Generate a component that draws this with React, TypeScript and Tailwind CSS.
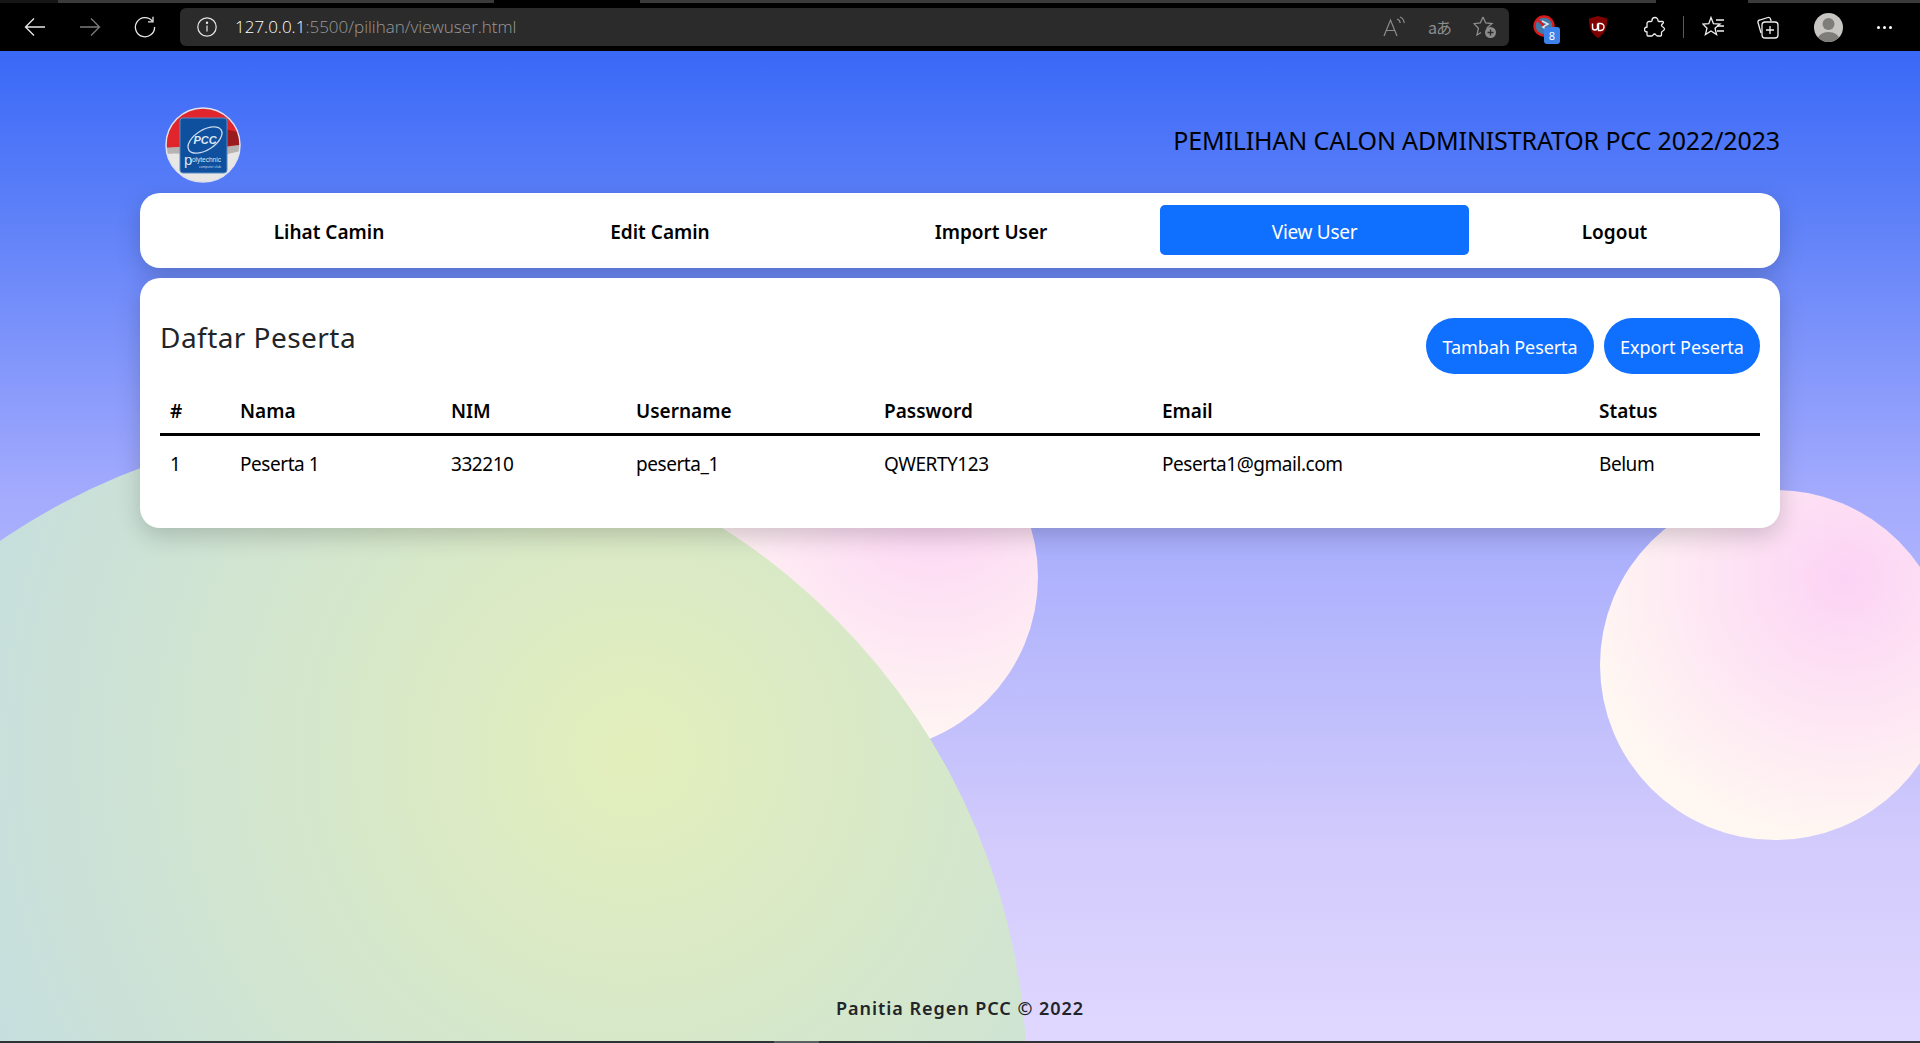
import React from "react";

const cols = ["w-[70px]", "w-[211px]", "w-[185px]", "w-[248px]", "w-[278px]", "w-[437px]", "w-[171px]"];
const heads = ["#", "Nama", "NIM", "Username", "Password", "Email", "Status"];
const cells = ["1", "Peserta 1", "332210", "peserta_1", "QWERTY123", "Peserta1@gmail.com", "Belum"];

function Logo() {
  return (
    <svg width="76" height="76" viewBox="0 0 76 76" className="block">
      <defs>
        <clipPath id="lc"><circle cx="38" cy="38" r="37" /></clipPath>
      </defs>
      <g clipPath="url(#lc)">
        <rect width="76" height="76" fill="#e9e6e6" />
        <rect width="76" height="42" fill="#e0252c" />
        <path d="M0 41 Q20 38 40 44 L76 37 L76 44 L40 52 Q20 45 0 47Z" fill="#b7b3b3" />
        <path d="M60 22 L76 26 L76 38 L62 39Z" fill="#9b1a20" />
      </g>
      <circle cx="38" cy="38" r="37" fill="none" stroke="#dfe3ee" strokeWidth="1.5" />
      <rect x="15" y="11" width="47" height="55" rx="3" fill="#0e4f9e" stroke="#5d8cc4" strokeWidth="1" />
      <ellipse cx="40" cy="33" rx="19" ry="10" fill="none" stroke="#c9d8ec" strokeWidth="1.3" transform="rotate(-32 40 33)" />
      <text x="40" y="37" textAnchor="middle" fontSize="11" fontStyle="italic" fontWeight="700" fill="#dbe6f4" fontFamily="'Liberation Sans',sans-serif">PCC</text>
      <text x="19" y="58" fontSize="15" fill="#dbe6f4" fontFamily="'Liberation Sans',sans-serif">p</text>
      <text x="27" y="55" fontSize="6.5" fill="#dbe6f4" fontFamily="'Liberation Sans',sans-serif">olytechnic</text>
      <text x="34" y="61" fontSize="3.5" fill="#c5d4e8" fontFamily="'Liberation Sans',sans-serif">computer club</text>
    </svg>
  );
}

function Chrome() {
  return (
    <div className="relative flex h-[51px] shrink-0 items-start bg-black pt-[8px] text-white">
      <div className="absolute left-0 top-0 flex h-[3px] w-full">
        <div className="w-[58px] bg-[#161616]" />
        <div className="w-[436px] bg-[#3a3a3a]" />
        <div className="w-[146px] bg-black" />
        <div className="w-[1016px] bg-[#3a3a3a]" />
        <div className="w-[92px] bg-black" />
        <div className="flex-1 bg-[#3a3a3a]" />
      </div>
      <div className="ml-[7px] flex h-[38px] items-center">
        <div className="flex w-[55px] justify-center">
          <svg width="22" height="22" viewBox="0 0 22 22" fill="none" stroke="#e8e8e8" strokeWidth="1.3"><path d="M21 11H1.5M10 2.5 1.5 11l8.5 8.5" /></svg>
        </div>
        <div className="flex w-[55px] justify-center">
          <svg width="22" height="22" viewBox="0 0 22 22" fill="none" stroke="#7b7b7b" strokeWidth="1.3"><path d="M1 11h19.5M12 2.5l8.5 8.5-8.5 8.5" /></svg>
        </div>
        <div className="flex w-[55px] justify-center">
          <svg width="22" height="22" viewBox="0 0 22 22" fill="none" stroke="#e8e8e8" strokeWidth="1.3"><path d="M18.5 5.2A9.6 9.6 0 1 0 20.6 11" /><path d="M19 .8v5h-5" /></svg>
        </div>
      </div>
      <div className="ml-[8px] flex h-[38px] w-[1329px] items-center rounded-[6px] bg-[#2b2b2b] pl-[17px]">
        <svg width="20" height="20" viewBox="0 0 20 20" fill="none" stroke="#e6e6e6" strokeWidth="1.2"><circle cx="10" cy="10" r="9.2" /><path d="M10 8.6v6" /><circle cx="10" cy="5.8" r=".6" fill="#e6e6e6" /></svg>
        <div className="ml-[18px] text-[17px] tracking-[0px] font-['Open_Sans',sans-serif] font-light">
          <span className="text-white">127.0.0.1</span><span className="text-[#9a9a9a]">:5500/pilihan/viewuser.html</span>
        </div>
        <div className="ml-auto flex items-center">
          <svg width="24" height="22" viewBox="0 0 24 22" fill="none" stroke="#8d8d8d" strokeWidth="1.2"><path d="M2 20 8.5 4 15 20M4.5 14.5h8" /><path d="M15 3c2 .6 3 2 3.2 4M18 1c2.8 1 4 3 4.2 6" /></svg>
          <div className="ml-[22px] text-[16px] leading-none tracking-[-1px] text-[#8d8d8d] font-['Noto_Sans_CJK_JP',sans-serif]">aあ</div>
          <div className="ml-[22px] mr-[12px]">
            <svg width="24" height="24" viewBox="0 0 24 24" fill="none" stroke="#8d8d8d" strokeWidth="1.3"><path d="M10 2 12.7 8l6.3.6-4.8 4.2 1 3.2M8 17.5l-4 2.500 1.400-6.800L1 8.700 7.300 8 10 2" /><circle cx="17.5" cy="17.5" r="5.5" fill="#8d8d8d" stroke="none" /><path d="M17.5 14.5v6M14.5 17.5h6" stroke="#2b2b2b" /></svg>
          </div>
        </div>
      </div>
      <div className="flex h-[38px] flex-1 items-center">
        <div className="relative ml-[24px] h-[24px] w-[24px]">
          <svg width="24" height="24" viewBox="0 0 24 24"><circle cx="11" cy="11" r="9.5" fill="#3f79a8" stroke="#d81c1c" strokeWidth="2.4" /><path d="M5 5l12 12" stroke="#d81c1c" strokeWidth="2.4" /><path d="M9 6l6 3-5 3 5 4" stroke="#d8e6f0" strokeWidth="1.6" fill="none" /></svg>
          <div className="absolute left-[11px] top-[12px] flex h-[17px] w-[16px] items-center justify-center rounded-[3px] bg-[#3b82ea] text-[11px] leading-none text-white">8</div>
        </div>
        <div className="ml-[31px]">
          <svg width="20" height="24" viewBox="0 0 20 24"><path d="M10 1 19 3.500C19 12 18 18 10 23 2 18 1 12 1 3.500Z" fill="#800000" /><path d="M4.500 8.500v4a2.500 2.500 0 0 0 5 0v-4" stroke="#fff" strokeWidth="1.4" fill="none" /><path d="M10.500 8.500h2a3 3 0 0 1 0 7h-2Z" stroke="#fff" strokeWidth="1.4" fill="none" /></svg>
        </div>
        <div className="ml-[36px]">
          <svg width="22" height="22" viewBox="0 0 22 22" fill="none" stroke="#efefef" strokeWidth="1.3"><path d="M8 4.500a3 3 0 0 1 6 0c0 .6.4 1 1 1h3.500a1 1 0 0 1 .8 1.500c-.5 1-1.800 1-1.800 2.500 0 1.600 3 1.500 3 3.500s-3 2-3 3.500V19a1 1 0 0 1-1 1h-3c-1.600 0-1.400-2-3-2s-1.500 2-3 2H4a1 1 0 0 1-1-1v-3c-1.500 0-2.500-1-2.500-2.500S1.500 11 3 11V7.500a2 2 0 0 1 2-2h2c.6 0 1-.4 1-1Z" /></svg>
        </div>
        <div className="ml-[17px] h-[22px] w-[1px] bg-[#5a5a5a]" />
        <div className="ml-[18px]">
          <svg width="23" height="22" viewBox="0 0 23 22" fill="none" stroke="#efefef" strokeWidth="1.3"><path d="M9 1.500 11.400 7.600 18 8l-5 4.200 1.600 6.400L9 15l-5.600 3.600L5 12.200 0.800 8l6-.4L9 1.500Z" /><path d="M14 4h8M15 10h7M15 15h7" /></svg>
        </div>
        <div className="ml-[31px]">
          <svg width="23" height="23" viewBox="0 0 23 23" fill="none" stroke="#efefef" strokeWidth="1.3"><path d="M5 17 2 6.500a2 2 0 0 1 1.500-2.500L12 1.500a2 2 0 0 1 2.500 1.500l.6 2" /><rect x="6" y="6" width="16" height="16" rx="3" fill="#000" /><path d="M14 10v8M10 14h8" /></svg>
        </div>
        <div className="ml-[35px] h-[29px] w-[29px] overflow-hidden rounded-full bg-[#c8c6c3]">
          <svg width="29" height="29" viewBox="0 0 29 29"><circle cx="14.500" cy="11" r="6" fill="#7e7d7a" /><ellipse cx="14.500" cy="27" rx="11" ry="8" fill="#7e7d7a" /></svg>
        </div>
        <div className="ml-[34px] flex gap-[3px]">
          <div className="h-[3px] w-[3px] rounded-full bg-white" />
          <div className="h-[3px] w-[3px] rounded-full bg-white" />
          <div className="h-[3px] w-[3px] rounded-full bg-white" />
        </div>
      </div>
    </div>
  );
}

export default function App() {
  return (
    <div className="flex h-[1043px] w-[1920px] flex-col overflow-hidden bg-black font-['Noto_Sans','Open_Sans',sans-serif]">
      <Chrome />
      <main className="relative flex flex-1 flex-col overflow-hidden bg-[linear-gradient(180deg,#3a69f7_0%,#5a7ef8_15%,#a4abfd_45%,#d2cbfc_80%,#e0d8ff_100%)]">
        <div className="absolute left-[688px] top-[351px] h-[350px] w-[350px] rounded-full bg-[radial-gradient(circle_at_70%_25%,#fcd3f5_0%,#fff8f2_75%)]" />
        <div className="absolute left-[1600px] top-[439px] h-[350px] w-[350px] rounded-full bg-[radial-gradient(circle_at_70%_25%,#fcd3f5_0%,#fff8f2_75%)]" />
        <div className="absolute left-[-285px] top-[375px] h-[1312px] w-[1312px] rounded-full bg-[radial-gradient(circle_at_70%_25%,#e3efbb_0%,#c5dedf_53%)]" />

        <div className="relative z-10 mx-[140px] flex flex-1 flex-col">
          <header className="flex items-start justify-between pl-[25px] pt-[56px]">
            <Logo />
            <h1 className="mt-[16px] text-[25px] leading-[34px] tracking-[-0.14px] text-black">PEMILIHAN CALON ADMINISTRATOR PCC 2022/2023</h1>
          </header>

          <nav className="mt-[10px] grid h-[75px] grid-cols-[338px_324px_338px_309px_291px] items-center rounded-[20px] bg-white px-[20px] shadow-[0_8px_24px_rgba(0,0,0,0.18)]">
            <a className="mt-[4px] text-center text-[19px] font-semibold text-black">Lihat Camin</a>
            <a className="mt-[4px] text-center text-[19px] font-semibold text-black">Edit Camin</a>
            <a className="mt-[4px] text-center text-[19px] font-semibold text-black">Import User</a>
            <a className="-mt-[1px] flex h-[50px] items-center justify-center rounded-[5px] bg-[#0f6fff] pt-[4px] text-[19px] tracking-[-0.3px] text-white">View User</a>
            <a className="mt-[4px] text-center text-[19px] font-semibold text-black">Logout</a>
          </nav>

          <section className="mt-[10px] h-[250px] rounded-[20px] bg-white px-[20px] pt-[40px] shadow-[0_8px_24px_rgba(0,0,0,0.18)]">
            <div className="flex items-start justify-between">
              <h2 className="-mt-[3px] text-[28px] leading-[44px] tracking-[0.45px] text-[#212529]">Daftar Peserta</h2>
              <div className="flex gap-[10px]">
                <button className="h-[56px] w-[168px] rounded-full bg-[#0f6fff] pt-[2px] text-[18px] tracking-[-0.1px] text-white">Tambah Peserta</button>
                <button className="h-[56px] w-[156px] rounded-full bg-[#0f6fff] pt-[2px] text-[18px] tracking-[0px] text-white">Export Peserta</button>
              </div>
            </div>
            <table className="w-[1600px] table-fixed border-collapse text-black">
              <thead>
                <tr className="border-b-[3px] border-black">
                  {heads.map((h, i) => (
                    <th key={h} className={`${cols[i]} h-[60px] pl-[10px] pt-[16px] text-left text-[19px] font-semibold`}>{h}</th>
                  ))}
                </tr>
              </thead>
              <tbody>
                <tr>
                  {cells.map((c, i) => (
                    <td key={c} className="h-[54px] pl-[10px] pt-[5px] text-[19px] tracking-[-0.45px]">{c}</td>
                  ))}
                </tr>
              </tbody>
            </table>
          </section>

          <footer className="mt-auto mb-[18px] pb-[1px] text-center">
            <p className="text-[18px] font-semibold leading-[28px] tracking-[0.95px] text-[#212529]">Panitia Regen PCC © 2022</p>
          </footer>
        </div>
        <div className="relative z-10 flex h-[2px] shrink-0 bg-[#2e3436]">
          <div className="ml-[774px] w-[45px] bg-[#5b5f60]" />
        </div>
      </main>
    </div>
  );
}
